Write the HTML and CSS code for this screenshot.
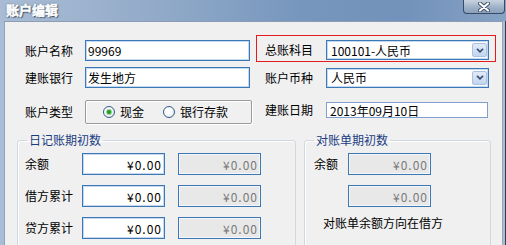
FILE: index.html
```html
<!DOCTYPE html>
<html lang="zh-CN">
<head>
  <meta charset="UTF-8" />
  <title>账户编辑</title>
  <link rel="stylesheet" href="styles.css">
</head>
<body>
  <div class="window">
    <div class="titlebar">
      <span class="title">账户编辑</span>
      <div class="close">
        <svg width="12" height="10" viewBox="0 0 12 10">
          <path d="M2 1.5 L10 8.5 M10 1.5 L2 8.5" stroke="#3b4c66" stroke-width="4" stroke-linecap="round" fill="none"/>
          <path d="M2 1.5 L10 8.5 M10 1.5 L2 8.5" stroke="#fff" stroke-width="2.2" stroke-linecap="round" fill="none"/>
        </svg>
      </div>
    </div>

    <div class="frame">
      <div class="content">
        <div class="row row-first">
          <div class="cell cell-left">
            <label class="lbl">账户名称</label>
            <input class="field" type="text" value="99969">
          </div>
          <div class="cell cell-right highlight">
            <label class="lbl lbl-right">总账科目</label>
            <div class="select">
              <span>100101-人民币</span>
              <span class="drop">
                <svg width="8" height="5" viewBox="0 0 8 5"><path d="M1 0.8 L4 3.8 L7 0.8" stroke="#3f5378" stroke-width="1.8" fill="none"/></svg>
              </span>
            </div>
          </div>
        </div>

        <div class="row row-second">
          <div class="cell cell-left">
            <label class="lbl">建账银行</label>
            <input class="field" type="text" value="发生地方">
          </div>
          <div class="cell cell-right">
            <label class="lbl lbl-right">账户币种</label>
            <div class="select">
              <span>人民币</span>
              <span class="drop">
                <svg width="8" height="5" viewBox="0 0 8 5"><path d="M1 0.8 L4 3.8 L7 0.8" stroke="#3f5378" stroke-width="1.8" fill="none"/></svg>
              </span>
            </div>
          </div>
        </div>

        <div class="row row-third">
          <div class="cell cell-left">
            <label class="lbl">账户类型</label>
            <div class="radio-box">
              <span class="radio checked"></span><span class="radio-text">现金</span>
              <span class="radio"></span><span class="radio-text">银行存款</span>
            </div>
          </div>
          <div class="cell cell-right cell-date">
            <label class="lbl lbl-right">建账日期</label>
            <input class="date" type="text" value="2013年09月10日">
          </div>
        </div>

        <div class="groups">
          <fieldset class="group group-journal">
            <legend>日记账期初数</legend>
            <div class="group-body">
              <div class="money-row">
                <span class="money-lbl">余额</span>
                <input class="money" type="text" value="¥0.00">
                <input class="money off" type="text" value="¥0.00" disabled>
              </div>
              <div class="money-row">
                <span class="money-lbl">借方累计</span>
                <input class="money" type="text" value="¥0.00">
                <input class="money off" type="text" value="¥0.00" disabled>
              </div>
              <div class="money-row">
                <span class="money-lbl">贷方累计</span>
                <input class="money" type="text" value="¥0.00">
                <input class="money off" type="text" value="¥0.00" disabled>
              </div>
            </div>
          </fieldset>

          <fieldset class="group group-statement">
            <legend>对账单期初数</legend>
            <div class="group-body">
              <div class="money-row">
                <span class="money-lbl">余额</span>
                <input class="money off" type="text" value="¥0.00" disabled>
              </div>
              <div class="money-row">
                <span class="money-lbl"></span>
                <input class="money off" type="text" value="¥0.00" disabled>
              </div>
              <div class="note">对账单余额方向在借方</div>
            </div>
          </fieldset>
        </div>
      </div>
    </div>
  </div>
</body>
</html>
```

FILE: styles.css
```css
* {
  box-sizing: border-box;
  margin: 0;
  padding: 0;
}

body {
  width: 506px;
  height: 245px;
  overflow: hidden;
  font-family: "Noto Sans CJK SC", "Liberation Sans", sans-serif;
  font-size: 12px;
  color: #000;
  background: #7896bd;
}

.window {
  width: 506px;
  height: 245px;
  display: flex;
  flex-direction: column;
  overflow: hidden;
}

/* title bar */
.titlebar {
  height: 21px;
  flex: none;
  display: flex;
  justify-content: space-between;
  align-items: flex-start;
  background: linear-gradient(to right, #a9bcd4 0%, #93abc9 30%, #7696bd 60%, #7292bb 80%, #86a2c4 100%);
}

.title {
  padding: 2px 0 0 6px;
  color: #fff;
  font-size: 13px;
  font-weight: bold;
  line-height: 16px;
  -webkit-text-stroke: 0.5px #fff;
  text-shadow: 0 0 2px #33465f, 1px 1px 1px #33465f;
}

.close {
  width: 42px;
  height: 14px;
  margin-right: 1px;
  border: 1px solid #374a66;
  border-top: none;
  border-radius: 0 0 4px 4px;
  background: linear-gradient(#c8d3e0, #9cafc6 60%, #8aa0bb);
  display: flex;
  align-items: center;
  justify-content: center;
}

/* window body */
.frame {
  flex: 1;
  display: flex;
  padding-left: 4px;
  padding-right: 2px;
  background: #a8bdd6;
  border-right: 1px solid #2c3e58;
}

.content {
  flex: 1;
  background: #f0f0f0;
  border-top: 1px solid #8a9db5;
  border-left: 1px solid #8ea2bb;
  border-right: 1px solid #a4a4a4;
  padding-top: 13px;
}

.row {
  display: flex;
}

.row-second {
  margin-top: 5px;
}

.row-third {
  margin-top: 12px;
}

.cell {
  display: flex;
  align-items: center;
}

.cell-left {
  width: 251px;
  padding-left: 20px;
}

.row-first .cell-left {
  padding-top: 4px;
}

.cell-right {
  width: 240px;
  padding-left: 9px;
}

.highlight {
  border: 1px solid #e51a1a;
  padding: 4px 0 1px 8px;
}

.cell-date {
  padding-bottom: 4px;
}

.lbl {
  width: 60px;
  line-height: 14px;
}

.lbl-right {
  width: 61px;
}

.field {
  width: 165px;
  height: 21px;
  padding: 0 2px;
  font: inherit;
  color: #000;
  background: #fff;
  border: 1px solid #3a78b8;
  box-shadow: inset 0 0 0 1px #c4d8ee;
  outline: none;
}

.select {
  width: 163px;
  height: 20px;
  display: flex;
  align-items: center;
  justify-content: space-between;
  padding: 0 1px 0 4px;
  background: #fff;
  border: 1px solid #3a78b8;
  box-shadow: inset 0 0 0 1px #c4d8ee;
}

.drop {
  width: 15px;
  height: 14px;
  display: flex;
  align-items: center;
  justify-content: center;
  border: 1px solid #a9c2e2;
  border-radius: 2px;
  background: linear-gradient(#e2ebf7, #c2d5ee);
}

.date {
  width: 162px;
  height: 16px;
  padding: 0 3px;
  font: inherit;
  line-height: 14px;
  background: #fff;
  border: 1px solid #7f9fce;
  outline: none;
}

/* radio group */
.radio-box {
  width: 167px;
  height: 24px;
  display: flex;
  align-items: center;
  padding-left: 17px;
  border: 1px solid #9a9a9a;
  border-radius: 2px;
  box-shadow: inset 1px 1px 0 #fff, 1px 1px 0 #fff;
}

.radio {
  width: 12px;
  height: 12px;
  border-radius: 50%;
  border: 1px solid #2f5d8c;
  background: radial-gradient(circle at 40% 40%, #fff 30%, #dcdcdc 100%);
  display: flex;
  align-items: center;
  justify-content: center;
}

.radio.checked::after {
  content: "";
  width: 4px;
  height: 4px;
  border-radius: 50%;
  background: #1e9c22;
  box-shadow: 0 0 0 1px #8fd08f;
}

.radio-text {
  margin-left: 5px;
  margin-right: 19px;
  line-height: 14px;
}

/* group boxes */
.groups {
  display: flex;
  gap: 8px;
  margin-top: 9px;
  padding-left: 12px;
}

.group {
  height: 140px;
  min-width: 0;
  border: 1px solid #d0d9e2;
  border-radius: 3px;
  box-shadow: inset 1px 1px 0 #fff;
}

.group legend {
  margin-left: 9px;
  padding: 0 2px;
  line-height: 14px;
  color: #1b3c82;
}

.group-journal {
  width: 279px;
}

.group-statement {
  width: 187px;
}

.group-body {
  padding: 6px 0 0 7px;
}

.group-statement .group-body {
  padding-left: 9px;
}

.money-row {
  display: flex;
  align-items: center;
  height: 22px;
}

.money-row + .money-row {
  margin-top: 10px;
}

.money-lbl {
  width: 57px;
  line-height: 14px;
}

.group-statement .money-lbl {
  width: 34px;
}

.money {
  width: 83px;
  height: 22px;
  padding: 0 2px;
  font: inherit;
  letter-spacing: 1px;
  text-align: right;
  color: #000;
  background: #fff;
  border: 1px solid #3a78b8;
  box-shadow: inset 0 0 0 1px #c4d8ee;
  outline: none;
}

.money.off {
  margin-left: 13px;
  color: #7a7a7a;
  background: #e8e8e8;
  box-shadow: inset 0 0 0 1px #f6f6f6;
}

.group-statement .money.off {
  margin-left: 0;
}

.note {
  margin-top: 9px;
  padding-left: 9px;
  line-height: 14px;
}
```
